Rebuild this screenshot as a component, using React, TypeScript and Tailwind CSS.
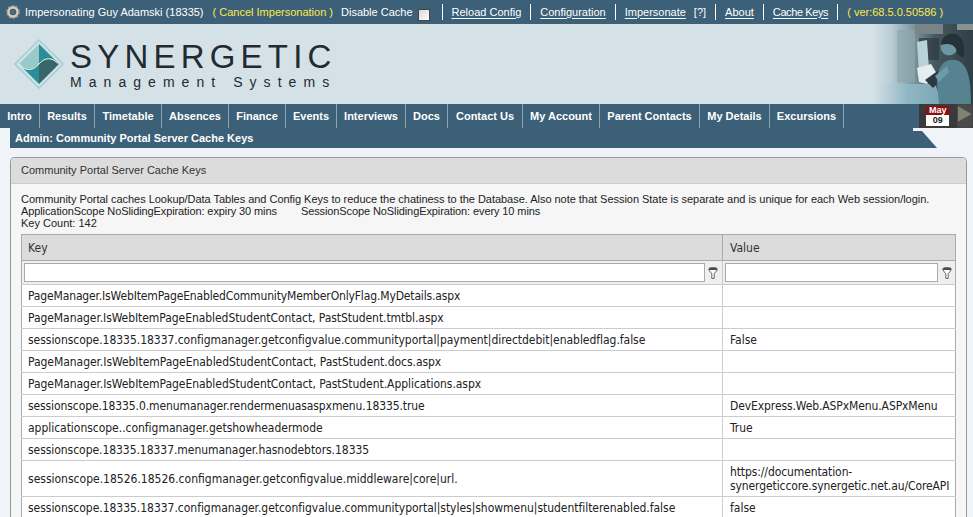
import React from "react";

const topLink = "text-white underline underline-offset-2 whitespace-nowrap";
const Sep = () => <span className="h-4 w-px shrink-0 bg-white mx-[9px]" />;

function Gear() {
  return (
    <svg width="14" height="14" viewBox="0 0 14 14" className="shrink-0">
      <circle cx="7" cy="7" r="4.6" fill="none" stroke="#d3cebd" strokeWidth="2.6" />
      <circle cx="7" cy="7" r="6" fill="none" stroke="#a9a493" strokeWidth="1.6" strokeDasharray="2 1.77" />
      <circle cx="7" cy="7" r="2" fill="#5d6a6f" />
    </svg>
  );
}

function Funnel() {
  return (
    <svg width="10" height="12" viewBox="0 0 10 12" className="shrink-0">
      <ellipse cx="5" cy="2.2" rx="4.4" ry="1.9" fill="#4a4a4a" stroke="#666" strokeWidth="0.6" />
      <path d="M0.8 3 L3.8 6.8 V11.4 H6.2 V6.8 L9.2 3" fill="#fff" stroke="#555" strokeWidth="0.9" />
    </svg>
  );
}

function LogoMark() {
  return (
    <svg width="50" height="50" viewBox="0 0 50 50" className="shrink-0">
      <path d="M25 1 L49 25 L25 49 L1 25 Z" fill="#d4e1e7" stroke="#a5d0d2" strokeWidth="1.6" />
      <path d="M25 5 L45 25 L25 45 L5 25 Z" fill="#96cacb" />
      <path d="M25 5 L45 25 C38 17 31 19 25 25 Z" fill="#2b8d98" />
      <path d="M25 25 C31 19 38 18 45 25 L25 45 Z" fill="#386769" />
      <path d="M7 27 C13 33 19 31 25 25 L25 45 Z" fill="#2b8d98" />
      <path d="M5.5 25 C12 33 19 32 25 25 C31 18 38 18 44.5 25" fill="none" stroke="#e6f2f2" strokeWidth="1" />
    </svg>
  );
}

function Photo() {
  return (
    <svg width="100" height="80" viewBox="0 0 100 80" className="absolute right-0 top-0">
      <defs>
        <linearGradient id="fade" x1="0" x2="1" y1="0" y2="0">
          <stop offset="0" stopColor="#d4e1e7" />
          <stop offset="0.18" stopColor="#b9ced6" />
          <stop offset="0.4" stopColor="#7f97a1" />
          <stop offset="0.62" stopColor="#46585f" />
          <stop offset="1" stopColor="#2f3f46" />
        </linearGradient>
        <linearGradient id="low" x1="0" x2="1" y1="0" y2="0">
          <stop offset="0" stopColor="#d4e1e7" />
          <stop offset="0.5" stopColor="#8fb6c4" />
          <stop offset="1" stopColor="#7ba6b6" />
        </linearGradient>
      </defs>
      <rect width="100" height="80" fill="url(#fade)" />
      <rect x="42" y="0" width="28" height="10" fill="#7a8487" />
      <rect x="84" y="0" width="16" height="6" fill="#8a9290" />
      <rect x="24" y="6" width="18" height="52" fill="#8fa7b0" opacity="0.7" />
      <rect x="46" y="14" width="20" height="22" fill="#2c3a40" opacity="0.7" />
      <path d="M0 60 H62 L70 80 H0 Z" fill="url(#low)" />
      <path d="M44 18 L54 16 L56 46 L46 50 Z" fill="#b8d2d8" />
      <path d="M44 44 L58 40 L64 50 L54 60 L46 58 Z" fill="#e4eeef" />
      <path d="M52 56 L66 46 L70 54 L60 64 Z" fill="#2c3a40" />
      <circle cx="76" cy="23" r="8.5" fill="#6d95a3" />
      <path d="M68 21 C68 10 82 6 88 14 C92 20 92 28 90 34 L84 30 C84 22 78 18 68 21 Z" fill="#25323a" />
      <path d="M64 58 C64 42 72 34 82 36 C94 38 98 52 98 80 H66 Z" fill="#56838f" />
      <path d="M62 52 L74 42 L76 48 L66 58 Z" fill="#6f9aa8" />
    </svg>
  );
}

const navItems: [string, string][] = [
  ["Intro", "w-[40px]"],
  ["Results", "w-[55px]"],
  ["Timetable", "w-[67px]"],
  ["Absences", "w-[67px]"],
  ["Finance", "w-[57px]"],
  ["Events", "w-[51px]"],
  ["Interviews", "w-[69px]"],
  ["Docs", "w-[42px]"],
  ["Contact Us", "w-[75px]"],
  ["My Account", "w-[77px]"],
  ["Parent Contacts", "w-[100px]"],
  ["My Details", "w-[70px]"],
  ["Excursions", "w-[74px]"],
];

const rows: [string, string, string, string, string][] = [
  ["PageManager.IsWebItemPageEnabledCommunityMemberOnlyFlag.MyDetails.aspx", "", "tracking-[-0.14px]", "", "h-[22px]"],
  ["PageManager.IsWebItemPageEnabledStudentContact, PastStudent.tmtbl.aspx", "", "tracking-[-0.06px]", "", "h-[22px]"],
  ["sessionscope.18335.18337.configmanager.getconfigvalue.communityportal|payment|directdebit|enabledflag.false", "False", "tracking-[-0.035px]", "", "h-[22px]"],
  ["PageManager.IsWebItemPageEnabledStudentContact, PastStudent.docs.aspx", "", "tracking-[-0.04px]", "", "h-[22px]"],
  ["PageManager.IsWebItemPageEnabledStudentContact, PastStudent.Applications.aspx", "", "tracking-[-0.05px]", "", "h-[22px]"],
  ["sessionscope.18335.0.menumanager.rendermenuasaspxmenu.18335.true", "DevExpress.Web.ASPxMenu.ASPxMenu", "tracking-[-0.1px]", "tracking-[-0.1px]", "h-[22px]"],
  ["applicationscope..configmanager.getshowheadermode", "True", "tracking-[-0.03px]", "", "h-[22px]"],
  ["sessionscope.18335.18337.menumanager.hasnodebtors.18335", "", "tracking-[-0.05px]", "", "h-[22px]"],
  ["sessionscope.18526.18526.configmanager.getconfigvalue.middleware|core|url.", "https://documentation-synergeticcore.synergetic.net.au/CoreAPI", "", "tracking-[-0.1px]", "h-[36px]"],
  ["sessionscope.18335.18337.configmanager.getconfigvalue.communityportal|styles|showmenu|studentfilterenabled.false", "false", "tracking-[-0.03px]", "", "h-[22px]"],
];

export default function App() {
  return (
    <div className="h-[517px] w-[973px] overflow-hidden bg-[#f0f4f8] text-[11px] text-[#222] font-['Liberation_Sans',Arial,sans-serif]">
      {/* top bar */}
      <div className="flex h-6 items-center whitespace-nowrap bg-[#3b6078] pl-[6px] text-[11px] text-white">
        <Gear />
        <span className="ml-[5px]">Impersonating Guy Adamski (18335)</span>
        <span className="ml-[9px] text-[#ffe94a]">( Cancel Impersonation )</span>
        <span className="ml-2">Disable Cache</span>
        <span className="ml-[5px] mt-[5px] h-3 w-3 shrink-0 border border-[#444] bg-gradient-to-br from-[#d8d8d8] to-white" />
        <span className="w-[3px]" />
        <Sep />
        <a className={topLink}>Reload Config</a>
        <Sep />
        <a className={topLink}>Configuration</a>
        <Sep />
        <a className={topLink}>Impersonate</a>
        <span className="ml-2">[?]</span>
        <Sep />
        <a className={topLink}>About</a>
        <Sep />
        <a className={`${topLink} tracking-[-0.4px]`}>Cache Keys</a>
        <Sep />
        <span className="text-[#ffe94a]">( ver:68.5.0.50586 )</span>
      </div>

      {/* header */}
      <div className="relative flex h-20 items-start bg-[#d4e1e7] pl-[14px] pt-[15px]">
        <LogoMark />
        <div className="ml-[6px] mt-[1px] flex flex-col whitespace-nowrap text-[#222a30]">
          <span className="text-[33px] leading-[34px] tracking-[5.2px]">SYNERGETIC</span>
          <span className="mt-[1px] text-[14px] leading-[14px] tracking-[7.05px]">Management Systems</span>
        </div>
        <Photo />
      </div>

      {/* nav */}
      <div className="flex h-6 items-stretch bg-[#3b6078]">
        {navItems.map(([n, w]) => (
          <div key={n} className={`flex items-center justify-center whitespace-nowrap border-r border-[#8fa3b0] text-[11px] font-bold text-white ${w}`}>
            {n}
          </div>
        ))}
        <div className="ml-auto flex w-[54px] items-center bg-[#3a3a3a] pl-[7px]">
          <div className="flex h-5 w-6 flex-col text-center text-[9px] font-bold">
            <span className="h-[9px] bg-[#8b0f0f] leading-[9px] text-white">May</span>
            <span className="h-[11px] bg-white leading-[11px] text-[#222]">09</span>
          </div>
          <svg width="16" height="24" viewBox="0 0 16 24" className="ml-2">
            <rect width="16" height="24" fill="#4a4a4a" />
            <path d="M1 2 L15 10 L1 18 Z" fill="#7d8271" />
          </svg>
        </div>
      </div>

      {/* sub title */}
      <div className="relative ml-[10px] flex h-5 w-[927px] items-center bg-[#3b6078] pl-[5px] text-[11px] font-bold text-white">
        Admin: Community Portal Server Cache Keys
        <svg width="24" height="20" viewBox="0 0 24 20" className="absolute right-0 top-0">
          <path d="M0 0 H24 V20 L9 3 H0 Z" fill="#f0f4f8" />
        </svg>
      </div>

      {/* panel */}
      <div className="ml-[10px] mt-[9px] w-[957px] rounded-t-[5px] border border-b-0 border-[#999] bg-[#f6f6f6]">
        <div className="flex h-[26px] items-center rounded-t-[5px] border-b border-[#ccc] bg-[#dcdcdc] pl-[10px] text-[11px] text-[#333]">
          Community Portal Server Cache Keys
        </div>
        <div className="px-[10px] pt-[9px] text-[11px] leading-[12px] text-[#222]">
          <div className="tracking-[-0.03px]">Community Portal caches Lookup/Data Tables and Config Keys to reduce the chatiness to the Database. Also note that Session State is separate and is unique for each Web session/login.</div>
          <div className="tracking-[-0.1px]">
            ApplicationScope NoSlidingExpiration: expiry 30 mins<span className="ml-6">SessionScope NoSlidingExpiration: every 10 mins</span>
          </div>
          <div>Key Count: 142</div>

          <table className="mt-[5px] w-[935px] table-fixed border-collapse border border-[#aaa] bg-white text-[12px] font-['DejaVu_Sans_Condensed','DejaVu_Sans',sans-serif] leading-[14px]">
            <colgroup>
              <col className="w-[701px]" />
              <col />
            </colgroup>
            <thead>
              <tr className="h-[26px] border-b border-[#aaa] bg-[#dcdcdc] text-left text-[#333]">
                <th className="border-r border-[#aaa] pl-[6px] font-normal">Key</th>
                <th className="pl-[7px] font-normal">Value</th>
              </tr>
              <tr className="h-6 border-b border-[#ccc] bg-[#efefef]">
                <th className="border-r border-[#ccc] pl-[2px] pr-[1px] font-normal">
                  <div className="flex items-center justify-between pr-[3px]">
                    <div className="h-[19px] w-[681px] border border-[#aaa] bg-white" />
                    <Funnel />
                  </div>
                </th>
                <th className="pl-[2px] font-normal">
                  <div className="flex items-center justify-between pr-[3px]">
                    <div className="h-[19px] w-[213px] border border-[#aaa] bg-white" />
                    <Funnel />
                  </div>
                </th>
              </tr>
            </thead>
            <tbody>
              {rows.map(([k, v, kt, vt, h]) => (
                <tr key={k} className="border-b border-[#ccc]">
                  <td className={`border-r border-[#ccc] px-[6px] py-[3px] align-middle ${h} ${kt}`}>{k}</td>
                  <td className={`px-[7px] py-[3px] align-middle ${h} ${vt}`}>{v}</td>
                </tr>
              ))}
            </tbody>
          </table>
        </div>
      </div>
    </div>
  );
}
